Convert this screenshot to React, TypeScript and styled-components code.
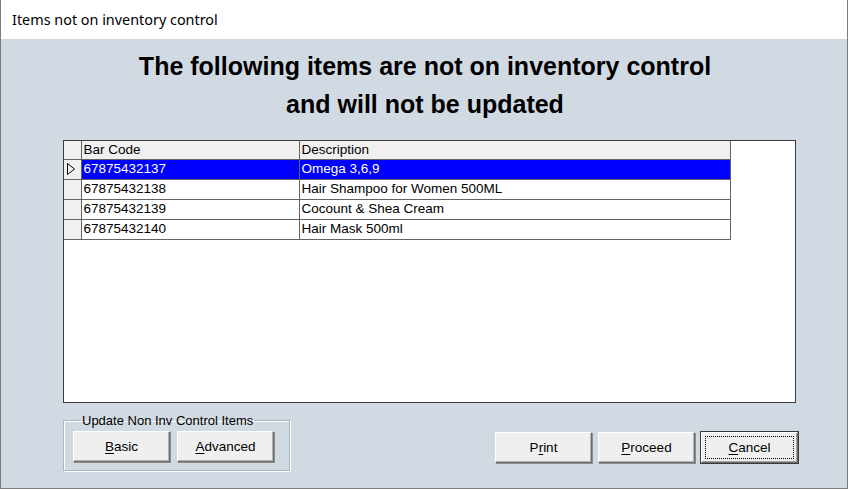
import React from "react";
import styled, { createGlobalStyle } from "styled-components";

const Global = createGlobalStyle`
  html, body { margin: 0; padding: 0; background: #ffffff; }
  * { box-sizing: border-box; }
`;

const Window = styled.div`
  width: 848px;
  height: 489px;
  display: flex;
  flex-direction: column;
  border: 1px solid #7d7d7d;
  border-top: none;
  background: #d1d9e2;
`;

const TitleBar = styled.div`
  height: 39px;
  flex: none;
  background: #ffffff;
  display: flex;
  align-items: center;
  padding-left: 11px;
  padding-bottom: 1px;
  font-family: "Noto Sans", "Open Sans", sans-serif;
  font-size: 14.4px;
  color: #000000;
`;

const Body = styled.div`
  flex: 1;
  display: flex;
  flex-direction: column;
  padding: 8px 49px 0 62px;
`;

const Heading = styled.h1`
  margin: 0 0 0 -62px;
  width: 848px;
  text-align: center;
  font-family: "Liberation Sans", Arial, sans-serif;
  font-weight: bold;
  font-size: 25px;
  line-height: 38px;
  color: #000000;
`;

const GridBox = styled.div`
  margin-top: 17px;
  width: 733px;
  height: 263px;
  background: #ffffff;
  border: 1px solid #3c3c3c;
`;

const Table = styled.table`
  border-collapse: collapse;
  font-family: "Liberation Sans", Arial, sans-serif;
  font-size: 13.5px;
  color: #000000;
`;

const HeadCell = styled.th<{ $w: number }>`
  width: ${(p) => p.$w}px;
  height: 18px;
  padding: 0 0 0 2px;
  background: #f0f0f0;
  border: 1px solid #646464;
  border-top: none;
  font-weight: normal;
  text-align: left;
  line-height: 16px;
  &:first-child { border-left: none; }
`;

const Row = styled.tr<{ $selected?: boolean }>`
  background: ${(p) => (p.$selected ? "#0000ff" : "#ffffff")};
  color: ${(p) => (p.$selected ? "#ffffff" : "#000000")};
`;

const Cell = styled.td`
  height: 20px;
  padding: 0 0 0 2px;
  border: 1px solid #646464;
  line-height: 18px;
  white-space: nowrap;
`;

const IndicatorCell = styled.td`
  height: 20px;
  padding: 0;
  background: #f0f0f0;
  border: 1px solid #646464;
  border-left: none;
  vertical-align: middle;
`;

const Arrow = styled.svg`
  display: block;
  margin-left: 2px;
`;

const BottomRow = styled.div`
  display: flex;
  justify-content: space-between;
  align-items: flex-start;
  margin-top: 10px;
`;

const Group = styled.fieldset`
  margin: 0;
  width: 226px;
  padding: 3px 15px 8px 9px;
  border: 1px solid #aeb4bb;
  box-shadow: 1px 1px 0 #ffffff, inset 1px 1px 0 #ffffff;
  display: flex;
  gap: 7px;
`;

const Legend = styled.legend`
  margin-left: 8px;
  padding: 0 1px;
  font-family: "Liberation Sans", Arial, sans-serif;
  font-size: 13px;
  line-height: 15px;
  color: #000000;
`;

const Actions = styled.div`
  display: flex;
  gap: 6px;
  margin-top: 19px;
`;

const Button = styled.button<{ $default?: boolean }>`
  width: 97px;
  height: 31px;
  margin: 0;
  padding: 0;
  display: flex;
  align-items: center;
  justify-content: center;
  background: #efefef;
  font-family: "Liberation Sans", Arial, sans-serif;
  font-size: 13.5px;
  color: #000000;
  border: 1px solid;
  border-color: #ffffff #6d6d6d #6d6d6d #ffffff;
  box-shadow: ${(p) =>
    p.$default
      ? "0 0 0 1px #3a3a3a, inset -1px -1px 0 #a0a0a0"
      : "1px 1px 0 #8c8c8c, inset -1px -1px 0 #b4b4b4"};
  cursor: default;
`;

const Focus = styled.span`
  display: flex;
  align-items: center;
  justify-content: center;
  width: 89px;
  height: 23px;
  border: 1px dotted #000000;
`;

const Key = styled.span`
  text-decoration: underline;
  text-underline-offset: 2px;
`;

const rows = [
  { code: "67875432137", desc: "Omega 3,6,9" },
  { code: "67875432138", desc: "Hair Shampoo for Women 500ML" },
  { code: "67875432139", desc: "Cocount & Shea Cream" },
  { code: "67875432140", desc: "Hair Mask 500ml" },
];

export default function App() {
  return (
    <>
      <Global />
      <Window>
        <TitleBar>Items not on inventory control</TitleBar>
        <Body>
          <Heading>
            The following items are not on inventory control
            <br />
            and will not be updated
          </Heading>
          <GridBox>
            <Table>
              <thead>
                <tr>
                  <HeadCell $w={17} />
                  <HeadCell $w={218}>Bar Code</HeadCell>
                  <HeadCell $w={431}>Description</HeadCell>
                </tr>
              </thead>
              <tbody>
                {rows.map((r, i) => (
                  <Row key={r.code} $selected={i === 0}>
                    <IndicatorCell>
                      {i === 0 && (
                        <Arrow width="10" height="14" viewBox="0 0 10 14">
                          <path d="M1.5 1.5 L8.5 7 L1.5 12.5 Z" fill="none" stroke="#000" strokeWidth="1" />
                        </Arrow>
                      )}
                    </IndicatorCell>
                    <Cell>{r.code}</Cell>
                    <Cell>{r.desc}</Cell>
                  </Row>
                ))}
              </tbody>
            </Table>
          </GridBox>
          <BottomRow>
            <Group>
              <Legend>Update Non Inv Control Items</Legend>
              <Button>
                <span>
                  <Key>B</Key>asic
                </span>
              </Button>
              <Button>
                <span>
                  <Key>A</Key>dvanced
                </span>
              </Button>
            </Group>
            <Actions>
              <Button>
                <span>
                  P<Key>r</Key>int
                </span>
              </Button>
              <Button>
                <span>
                  <Key>P</Key>roceed
                </span>
              </Button>
              <Button $default>
                <Focus>
                  <Key>C</Key>ancel
                </Focus>
              </Button>
            </Actions>
          </BottomRow>
        </Body>
      </Window>
    </>
  );
}
